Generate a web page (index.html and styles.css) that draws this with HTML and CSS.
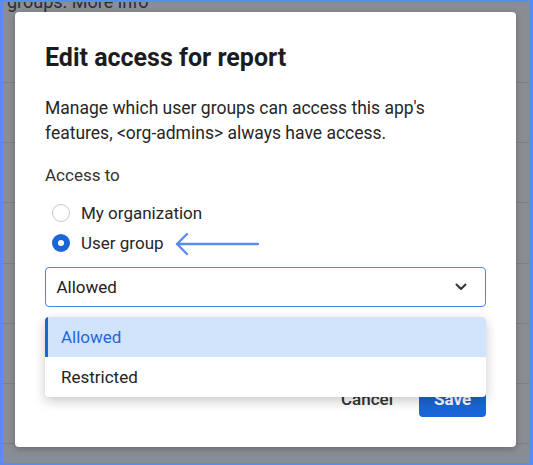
FILE: index.html
```html
<!DOCTYPE html>
<html lang="en">
<head>
    <title>Edit access for report</title>
    <meta charset="UTF-8" />
    <meta name="viewport" content="width=device-width, initial-scale=1.0" />
    <link rel="stylesheet" href="styles.css">
</head>
<body>
    <div class="frame">
        <!-- page behind the modal -->
        <div class="backdrop">
            <div class="backdrop-text">groups. More info</div>
            <div class="backdrop-row"></div>
            <div class="backdrop-row"></div>
            <div class="backdrop-row"></div>
            <div class="backdrop-row"></div>
            <div class="backdrop-row"></div>
            <div class="backdrop-row"></div>
            <div class="backdrop-row"></div>
        </div>

        <div class="dialog">
            <h1>Edit access for report</h1>
            <p>Manage which user groups can access this app's features, &lt;org-admins&gt; always have access.</p>

            <div class="field-label">Access to</div>
            <div class="radio-group">
                <label class="radio-row">
                    <span class="radio"></span>
                    <span>My organization</span>
                </label>
                <label class="radio-row">
                    <span class="radio checked"></span>
                    <span>User group</span>
                    <svg class="pointer" width="84" height="24" viewBox="0 0 84 24">
                        <path d="M2 12 H83 M12 2 L2 12 L12 22" fill="none" stroke="#5a8cef" stroke-width="2.4" stroke-linecap="round" stroke-linejoin="round"/>
                    </svg>
                </label>
            </div>

            <div class="select-wrap">
                <div class="select">
                    <span>Allowed</span>
                    <svg width="12" height="8" viewBox="0 0 12 8">
                        <path d="M1.5 1.5 L6 6 L10.5 1.5" fill="none" stroke="#333" stroke-width="2" stroke-linecap="round" stroke-linejoin="round"/>
                    </svg>
                </div>
                <ul class="menu">
                    <li class="active">Allowed</li>
                    <li>Restricted</li>
                </ul>
            </div>

            <div class="actions">
                <button class="btn-text">Cancel</button>
                <button class="btn-primary">Save</button>
            </div>
        </div>
    </div>
</body>
</html>
```

FILE: styles.css
```css
* {
    margin: 0;
    padding: 0;
    box-sizing: border-box;
}

body {
    font-family: Roboto, "Liberation Sans", Arial, sans-serif;
    color: #222;
    background: #5a8cef;
}

.frame {
    position: relative;
    width: 533px;
    height: 465px;
    border-style: solid;
    border-color: #5a8cef;
    border-width: 2px 4px 2px 3px;
    background: #8a8d93;
    overflow: hidden;
}

/* Backdrop page */
.backdrop-text {
    font-size: 18px;
    line-height: 20px;
    margin-top: -10px;
    padding-left: 4px;
    color: #2c2e33;
}

.backdrop-row {
    height: 60.2px;
    border-top: 1.5px solid #7b7e85;
}

.backdrop-text + .backdrop-row {
    margin-top: 70px;
}

/* Modal */
.dialog {
    position: absolute;
    left: 12px;
    top: 10px;
    width: 501px;
    height: 435px;
    background: #fff;
    border-radius: 4px;
    padding: 30px;
    box-shadow: 0 2px 6px rgba(0, 0, 0, 0.25);
}

h1 {
    font-size: 25px;
    line-height: 32px;
    font-weight: 700;
    color: #1c1c1c;
}

p {
    margin-top: 22px;
    max-width: 405px;
    font-size: 17.5px;
    line-height: 25px;
    color: #262626;
}

.field-label {
    margin-top: 17px;
    font-size: 17px;
    line-height: 25px;
    color: #333;
}

.radio-group {
    margin-top: 10px;
}

.radio-row {
    display: flex;
    align-items: center;
    height: 30px;
    padding-left: 7px;
    gap: 11px;
    font-size: 17px;
    color: #262626;
}

.radio {
    width: 18px;
    height: 18px;
    border-radius: 50%;
    border: 1.5px solid #c9c9c9;
    display: flex;
    align-items: center;
    justify-content: center;
}

.radio.checked {
    border: none;
    background: #1b66d6;
}

.radio.checked::after {
    content: "";
    width: 6px;
    height: 6px;
    border-radius: 50%;
    background: #fff;
}

.pointer {
    margin-left: 0;
    margin-top: 2px;
}

/* Select */
.select-wrap {
    position: relative;
    margin-top: 8.5px;
}

.select {
    height: 40px;
    border: 1.5px solid #4a86ec;
    border-radius: 4px;
    display: flex;
    align-items: center;
    justify-content: space-between;
    padding: 0 18px 0 10.5px;
    font-size: 17px;
    color: #222;
}

.menu {
    position: absolute;
    left: 0;
    right: 0;
    top: 50px;
    list-style: none;
    background: #fff;
    border-radius: 4px;
    box-shadow: 0 4px 12px rgba(0, 0, 0, 0.22);
    overflow: hidden;
    z-index: 2;
}

.menu li {
    height: 40px;
    display: flex;
    align-items: center;
    padding-left: 13px;
    font-size: 17px;
    color: #222;
    border-left: 3px solid transparent;
}

.menu li.active {
    background: #d2e3fc;
    color: #1f68d9;
    border-left-color: #1b66d6;
}

/* Footer buttons */
.actions {
    margin-top: 74px;
    display: flex;
    justify-content: flex-end;
    align-items: center;
    gap: 26px;
}

button {
    font-family: inherit;
    font-size: 17px;
    border: none;
    height: 36px;
    border-radius: 4px;
}

.btn-text {
    background: none;
    color: #333;
    font-weight: 500;
}

.btn-primary {
    width: 67px;
    background: #1b66d6;
    color: #fff;
    font-weight: 700;
}
```
